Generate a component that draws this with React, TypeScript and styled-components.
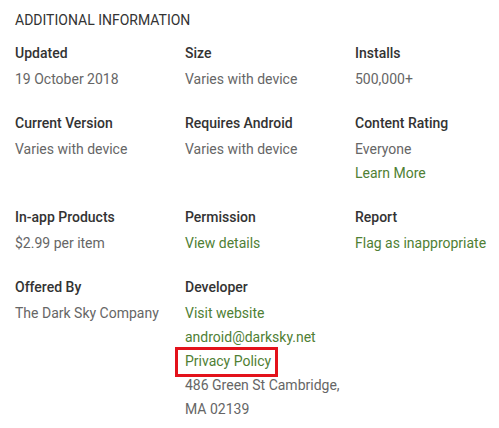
import React from 'react'
import styled, { createGlobalStyle } from 'styled-components'

const GlobalStyle = createGlobalStyle`
  body {
    margin: 0;
    background: #fff;
    font-family: Roboto, "Liberation Sans", Arial, sans-serif;
  }
`

const Section = styled.section`
  padding: 8px 15px 0;
`

const Title = styled.h2`
  margin: 0 0 9px;
  font-size: 14px;
  font-weight: 400;
  line-height: 24px;
  color: #333;
  text-transform: uppercase;
`

const Grid = styled.div`
  display: grid;
  grid-template-columns: 170px 170px 150px;
  row-gap: 20px;
`

const Item = styled.div`
  display: flex;
  flex-direction: column;
`

const Label = styled.div`
  font-size: 14px;
  font-weight: 500;
  line-height: 24px;
  color: #333;
  margin-bottom: 2px;
`

// $boxed draws the red annotation frame round a line
const Value = styled.span<{ $link?: boolean; $boxed?: boolean }>`
  position: relative;
  align-self: flex-start;
  font-size: 14px;
  font-weight: 400;
  line-height: 24px;
  color: ${(p) => (p.$link ? '#4f8034' : '#666')};

  ${(p) =>
    p.$boxed &&
    `
    &::after {
      content: "";
      position: absolute;
      left: -10px;
      right: -7px;
      top: -2px;
      bottom: -4px;
      border: 3px solid #e3121b;
    }
  `}
`

type Line = { text: string; link?: boolean; boxed?: boolean }
type Info = { label: string; lines: Line[] }

const info: Info[] = [
  { label: 'Updated', lines: [{ text: '19 October 2018' }] },
  { label: 'Size', lines: [{ text: 'Varies with device' }] },
  { label: 'Installs', lines: [{ text: '500,000+' }] },
  { label: 'Current Version', lines: [{ text: 'Varies with device' }] },
  { label: 'Requires Android', lines: [{ text: 'Varies with device' }] },
  { label: 'Content Rating', lines: [{ text: 'Everyone' }, { text: 'Learn More', link: true }] },
  { label: 'In-app Products', lines: [{ text: '$2.99 per item' }] },
  { label: 'Permission', lines: [{ text: 'View details', link: true }] },
  { label: 'Report', lines: [{ text: 'Flag as inappropriate', link: true }] },
  { label: 'Offered By', lines: [{ text: 'The Dark Sky Company' }] },
  {
    label: 'Developer',
    lines: [
      { text: 'Visit website', link: true },
      { text: 'android@darksky.net', link: true },
      { text: 'Privacy Policy', link: true, boxed: true },
      { text: '486 Green St Cambridge,' },
      { text: 'MA 02139' },
    ],
  },
]

const App = () => (
  <>
    <GlobalStyle />
    <Section>
      <Title>Additional Information</Title>
      <Grid>
        {info.map((item) => (
          <Item key={item.label}>
            <Label>{item.label}</Label>
            {item.lines.map((l) => (
              <Value key={l.text} $link={l.link} $boxed={l.boxed}>
                {l.text}
              </Value>
            ))}
          </Item>
        ))}
      </Grid>
    </Section>
  </>
)

export default App
